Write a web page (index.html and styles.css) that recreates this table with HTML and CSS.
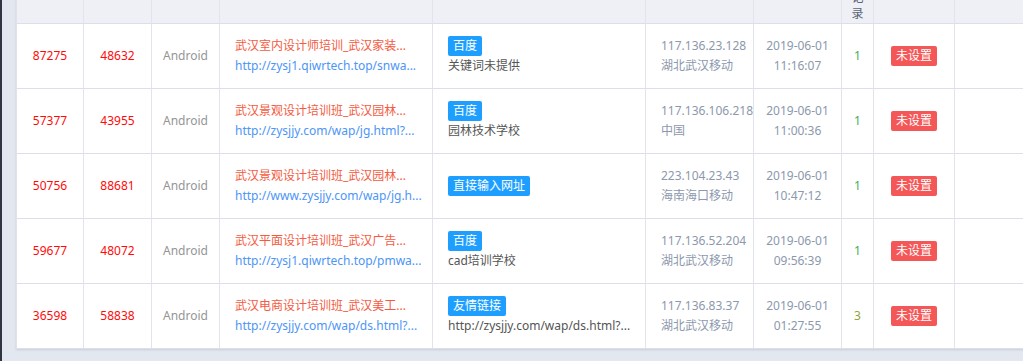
FILE: index.html
```html
<!DOCTYPE html>
<html lang="zh-CN">
<head>
<meta charset="utf-8">
<title>访问记录</title>
<link rel="stylesheet" href="styles.css">
</head>
<body>
<div class="app">
  <div class="edge"></div>
  <div class="main">
    <div class="table">
      <div class="cell th"></div>
      <div class="cell th"></div>
      <div class="cell th"></div>
      <div class="cell th"></div>
      <div class="cell th"></div>
      <div class="cell th"></div>
      <div class="cell th"></div>
      <div class="cell th narrow">访问记录</div>
      <div class="cell th"></div>
      <div class="cell th"></div>

      <div class="cell c num">87275</div>
      <div class="cell c num">48632</div>
      <div class="cell c dev">Android</div>
      <div class="cell l"><div class="title">武汉室内设计师培训_武汉家装...</div><div class="url">http://zysj1.qiwrtech.top/snwa...</div></div>
      <div class="cell l"><div><span class="tag">百度</span></div><div class="kw">关键词未提供</div></div>
      <div class="cell l ip"><div>117.136.23.128</div><div>湖北武汉移动</div></div>
      <div class="cell c ip"><div>2019-06-01</div><div>11:16:07</div></div>
      <div class="cell c cnt">1</div>
      <div class="cell c"><div><span class="badge">未设置</span></div></div>
      <div class="cell"></div>

      <div class="cell c num">57377</div>
      <div class="cell c num">43955</div>
      <div class="cell c dev">Android</div>
      <div class="cell l"><div class="title">武汉景观设计培训班_武汉园林...</div><div class="url">http://zysjjy.com/wap/jg.html?...</div></div>
      <div class="cell l"><div><span class="tag">百度</span></div><div class="kw">园林技术学校</div></div>
      <div class="cell l ip"><div>117.136.106.218</div><div>中国</div></div>
      <div class="cell c ip"><div>2019-06-01</div><div>11:00:36</div></div>
      <div class="cell c cnt">1</div>
      <div class="cell c"><div><span class="badge">未设置</span></div></div>
      <div class="cell"></div>

      <div class="cell c num">50756</div>
      <div class="cell c num">88681</div>
      <div class="cell c dev">Android</div>
      <div class="cell l"><div class="title">武汉景观设计培训班_武汉园林...</div><div class="url">http://www.zysjjy.com/wap/jg.h...</div></div>
      <div class="cell l"><div><span class="tag">直接输入网址</span></div></div>
      <div class="cell l ip"><div>223.104.23.43</div><div>海南海口移动</div></div>
      <div class="cell c ip"><div>2019-06-01</div><div>10:47:12</div></div>
      <div class="cell c cnt">1</div>
      <div class="cell c"><div><span class="badge">未设置</span></div></div>
      <div class="cell"></div>

      <div class="cell c num">59677</div>
      <div class="cell c num">48072</div>
      <div class="cell c dev">Android</div>
      <div class="cell l"><div class="title">武汉平面设计培训班_武汉广告...</div><div class="url">http://zysj1.qiwrtech.top/pmwa...</div></div>
      <div class="cell l"><div><span class="tag">百度</span></div><div class="kw">cad培训学校</div></div>
      <div class="cell l ip"><div>117.136.52.204</div><div>湖北武汉移动</div></div>
      <div class="cell c ip"><div>2019-06-01</div><div>09:56:39</div></div>
      <div class="cell c cnt">1</div>
      <div class="cell c"><div><span class="badge">未设置</span></div></div>
      <div class="cell"></div>

      <div class="cell c num">36598</div>
      <div class="cell c num">58838</div>
      <div class="cell c dev">Android</div>
      <div class="cell l"><div class="title">武汉电商设计培训班_武汉美工...</div><div class="url">http://zysjjy.com/wap/ds.html?...</div></div>
      <div class="cell l"><div><span class="tag">友情链接</span></div><div class="kw">http://zysjjy.com/wap/ds.html?...</div></div>
      <div class="cell l ip"><div>117.136.83.37</div><div>湖北武汉移动</div></div>
      <div class="cell c ip"><div>2019-06-01</div><div>01:27:55</div></div>
      <div class="cell c cnt cnt-more">3</div>
      <div class="cell c"><div><span class="badge">未设置</span></div></div>
      <div class="cell"></div>
    </div>
  </div>
</div>
</body>
</html>
```
FILE: styles.css
```css
html, body {
  margin: 0;
  padding: 0;
  height: 100%;
  overflow: hidden;
}
body {
  background: #e3e7ef;
  font-family: "Noto Sans", "Noto Sans CJK SC", sans-serif;
  font-size: 12px;
  color: #666;
}
.app {
  display: flex;
  height: 100%;
}
.edge {
  width: 2px;
  flex: none;
  background: #2f3541;
}
.main {
  flex: 1;
  min-width: 0;
  padding-left: 14px;
  overflow: hidden;
}
.table {
  display: grid;
  grid-template-columns: 67px 68px 68px 213px 213px 108px 88px 32px 81px 200px;
  width: max-content;
  margin-top: -43px;
  background: #fff;
  border-left: 1px solid #dfe2eb;
  box-shadow: 0 1px 2px rgba(60, 70, 100, 0.15);
}
.cell {
  box-sizing: border-box;
  height: 65px;
  border-right: 1px solid #e1e4ed;
  border-bottom: 1px solid #dcdfe9;
  display: flex;
  flex-direction: column;
  justify-content: center;
  line-height: 20px;
  white-space: nowrap;
  overflow: hidden;
}
.th {
  height: 67px;
  background: #eef0f6;
  color: #5d6477;
  text-align: center;
  align-items: center;
  line-height: 16px;
}
.th.narrow {
  white-space: normal;
  padding: 0 9px;
  word-break: break-all;
}
.c {
  text-align: center;
  align-items: center;
}
.l {
  padding-left: 15px;
}
.num {
  color: #ff0a0a;
}
.dev {
  color: #959595;
}
.title {
  color: #f45a42;
}
.url {
  color: #4d95f7;
}
.kw {
  color: #555;
}
.tag {
  display: inline-block;
  height: 20px;
  line-height: 20px;
  padding: 0 5px;
  border-radius: 2px;
  background: #1e9fff;
  color: #fff;
}
.ip {
  color: #8c98ad;
}
.cnt {
  color: #3cae62;
}
.cnt-more {
  color: #8fa63a;
}
.badge {
  display: inline-block;
  height: 20px;
  line-height: 20px;
  padding: 0 5px;
  border-radius: 2px;
  background: #f45757;
  color: #fff;
}
```
